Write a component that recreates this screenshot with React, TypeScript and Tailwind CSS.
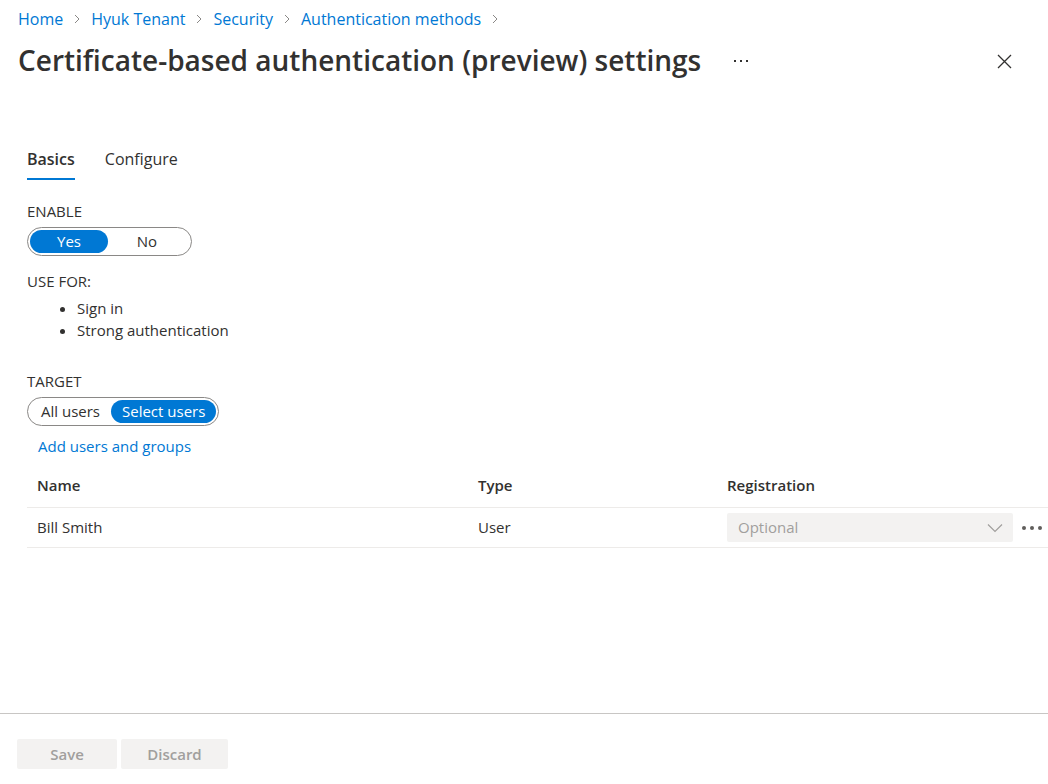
import React from "react";

const crumbs = ["Home", "Hyuk Tenant", "Security", "Authentication methods"];

const Chevron = () => (
  <svg width="10" height="10" viewBox="0 0 10 10" className="mx-[9px]">
    <path d="M3 1l4 4-4 4" fill="none" stroke="#8a8886" strokeWidth="1" />
  </svg>
);

const Segmented: React.FC<{ options: string[]; selected: number; className?: string }> = ({
  options,
  selected,
  className,
}) => (
  <div
    className={`flex h-[29px] items-center rounded-full border border-[#8a8886] px-[2px] ${className ?? ""}`}
  >
    {options.map((opt, i) => (
      <div
        key={opt}
        className={
          i === selected
            ? "flex h-[23px] items-center justify-center rounded-full bg-[#0078d4] px-[11px] text-white"
            : "flex h-[23px] items-center justify-center px-[11px] text-[#323130]"
        }
      >
        {opt}
      </div>
    ))}
  </div>
);

export default function App() {
  return (
    <div
      className="flex h-[784px] w-[1048px] flex-col bg-white text-[15px] text-[#323130]"
      style={{ fontFamily: '"Open Sans", "Noto Sans", sans-serif' }}
    >
      {/* header */}
      <div className="px-[18px] pt-[7px]">
        <div className="flex h-[24px] items-center text-[16px] text-[#0078d4]">
          {crumbs.map((c) => (
            <React.Fragment key={c}>
              <span>{c}</span>
              <Chevron />
            </React.Fragment>
          ))}
        </div>
        <div className="mt-[10px] flex h-[38px] items-center">
          <h1 className="text-[28px] font-semibold text-[#323130]">
            Certificate-based authentication (preview) settings
          </h1>
          <svg width="14" height="4" viewBox="0 0 14 4" className="ml-[33px] mt-[2px]">
            <rect x="0" y="1" width="2" height="2" fill="#323130" />
            <rect x="6" y="1" width="2" height="2" fill="#323130" />
            <rect x="12" y="1" width="2" height="2" fill="#323130" />
          </svg>
          <svg width="15" height="15" viewBox="0 0 15 15" className="ml-auto mr-[18px] mt-[2px]">
            <path d="M1 1l13 13M14 1L1 14" stroke="#323130" strokeWidth="1.3" />
          </svg>
        </div>
      </div>

      {/* body */}
      <div className="flex-1 pl-[27px] pt-[67px]">
        <div className="flex gap-[30px] text-[16px]">
          <div className="flex flex-col">
            <span className="h-[26px] font-semibold leading-[26px]">Basics</span>
            <div className="mt-[6px] h-[2px] bg-[#0078d4]" />
          </div>
          <span className="h-[26px] leading-[26px]">Configure</span>
        </div>

        <div className="mt-[21px] leading-[20px]">ENABLE</div>
        <Segmented options={["Yes", "No"]} selected={0} className="mt-[6px] w-[165px] [&>div]:w-[78px]" />

        <div className="mt-[15px] leading-[20px]">USE FOR:</div>
        <ul className="mt-[6px] list-disc pl-[50px] leading-[22px]">
          <li>Sign in</li>
          <li>Strong authentication</li>
        </ul>

        <div className="mt-[30px] leading-[20px]">TARGET</div>
        <Segmented options={["All users", "Select users"]} selected={1} className="mt-[6px] w-fit" />

        <div className="ml-[11px] mt-[9px] h-[22px] text-[#0078d4]">Add users and groups</div>

        <div className="mt-[7px] border-b border-[#edebe9]">
          <div className="grid h-[43px] grid-cols-[441px_249px_1fr] items-center pl-[10px] font-semibold">
            <span>Name</span>
            <span>Type</span>
            <span>Registration</span>
          </div>
        </div>
        <div className="border-b border-[#edebe9]">
          <div className="grid h-[39px] grid-cols-[441px_249px_1fr] items-center pl-[10px]">
            <span>Bill Smith</span>
            <span>User</span>
            <div className="flex items-center">
              <div className="flex h-[29px] w-[286px] shrink-0 items-center justify-between rounded-[2px] bg-[#f3f2f1] pl-[11px] pr-[10px] text-[#a19f9d]">
                <span>Optional</span>
                <svg width="16" height="10" viewBox="0 0 16 10">
                  <path d="M1 1.5l7 7 7-7" fill="none" stroke="#a19f9d" strokeWidth="1.2" />
                </svg>
              </div>
              <svg width="22" height="6" viewBox="0 0 22 6" className="ml-[8px] shrink-0">
                <circle cx="3" cy="3" r="2" fill="#605e5c" />
                <circle cx="11" cy="3" r="2" fill="#605e5c" />
                <circle cx="19" cy="3" r="2" fill="#605e5c" />
              </svg>
            </div>
          </div>
        </div>
      </div>

      {/* footer */}
      <div className="h-[71px] border-t border-[#c8c6c4] px-[17px] pt-[25px]">
        <div className="flex gap-[4px]">
          <button className="h-[30px] w-[100px] rounded-[2px] bg-[#f3f2f1] font-semibold text-[#a19f9d]">
            Save
          </button>
          <button className="h-[30px] w-[107px] rounded-[2px] bg-[#f3f2f1] font-semibold text-[#a19f9d]">
            Discard
          </button>
        </div>
      </div>
    </div>
  );
}
